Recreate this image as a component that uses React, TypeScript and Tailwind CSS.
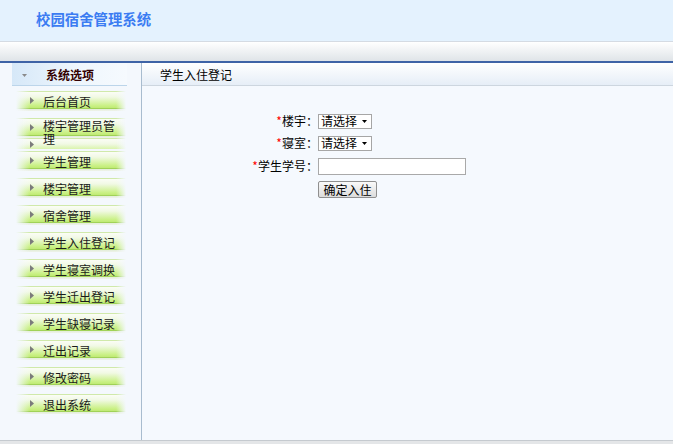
import React from "react";

const items: string[] = [
  "后台首页",
  "楼宇管理员管理",
  "学生管理",
  "楼宇管理",
  "宿舍管理",
  "学生入住登记",
  "学生寝室调换",
  "学生迁出登记",
  "学生缺寝记录",
  "迁出记录",
  "修改密码",
  "退出系统",
];

function Arrow() {
  return (
    <svg width="4" height="7" viewBox="0 0 4 7" className="block shrink-0">
      <path d="M0 0 L4 3.5 L0 7 Z" fill="#7b7b7b" />
    </svg>
  );
}

function MenuItem({ label, tall }: { label: string; tall?: boolean }) {
  return (
    <li
      className={
        "ml-[16px] w-[110px] flex pl-[14px] bg-repeat-y [background-size:100%_20px] [background-image:linear-gradient(to_right,#f4f8fd,#f4f8fd00_14px,#f4f8fd00_calc(100%_-_10px),#f4f8fd),linear-gradient(to_bottom,#d0e9aa_0px,#d0e9aa_1px,#fbfdf6_1px,#f1f9e4_6px,#c8f081_15px,#bfe975_17px,#a0d257_17px,#a0d257_18px,#e3edd8_18px,#eef3ea_20px)] " +
        (tall ? "h-[31px] mb-[2px]" : "h-[20px] mb-[7px]")
      }
    >
      <div className="w-[4px] flex flex-col pt-[6px] gap-[10px]">
        <Arrow />
        {tall && <Arrow />}
      </div>
      <span
        className={
          "ml-[9px] w-[80px] text-[12px] leading-[13px] text-[#1a1a1a] " +
          (tall ? "pt-[1px]" : "pt-[4px]")
        }
      >
        {label}
      </span>
    </li>
  );
}

function Select() {
  return (
    <div className="w-[54px] h-[15px] border border-[#a6a6a6] bg-white flex items-center pl-[2px] text-[12px] leading-none text-black">
      <span>请选择</span>
      <svg className="ml-auto mr-[4px] block" width="5" height="3" viewBox="0 0 5 3">
        <path d="M0 0 H5 L2.5 3 Z" fill="#000" />
      </svg>
    </div>
  );
}

function Label({ text }: { text: string }) {
  return (
    <div className="text-right text-[12px] leading-none text-black whitespace-nowrap">
      <span className="text-[#ff0000]">*</span>
      {text}：
    </div>
  );
}

export default function App() {
  return (
    <div className="w-[673px] h-[444px] flex flex-col bg-[#f5f9fe] overflow-hidden font-['Noto_Sans_CJK_SC','Liberation_Sans',sans-serif]">
      {/* header */}
      <header className="h-[41px] shrink-0 bg-[#e4f2fe] flex items-center pl-[36px] pb-[3px]">
        <h1 className="text-[14.4px] font-bold text-[#3b7cf2] leading-none">校园宿舍管理系统</h1>
      </header>
      {/* gray bar */}
      <div className="h-[22px] shrink-0 border-t border-[#d5dbe3] border-b-2 border-b-[#3e63a6] bg-[linear-gradient(to_bottom,#ffffff,#dfe4e8)]" />
      {/* main */}
      <div className="h-[377px] shrink-0 flex">
        <aside className="w-[142px] shrink-0 border-r border-[#a8bccf] bg-[#f4f8fd]">
          <div className="ml-[12px] w-[115px] h-[23px] border-b border-[#bcd5ea] bg-[linear-gradient(to_right,#d6e8f8,#eef6fd_55%,#f6fafe)] flex items-center pl-[10px] pt-[2px]">
            <svg width="5" height="3" viewBox="0 0 5 3" className="block shrink-0">
              <path d="M0 0 H5 L2.5 3 Z" fill="#8a8a8a" />
            </svg>
            <span className="ml-[19px] text-[12px] font-bold text-[#330000] leading-none">系统选项</span>
          </div>
          <ul className="mt-[5px]">
            {items.map((it, i) => (
              <MenuItem key={it} label={it} tall={i === 1} />
            ))}
          </ul>
        </aside>
        <main className="flex-1">
          <div className="h-[23px] border-b border-[#cdd6df] bg-[linear-gradient(to_bottom,#ffffff,#e6eef7)] flex items-center pl-[18px] pt-[2px]">
            <span className="text-[12px] leading-none text-black">学生入住登记</span>
          </div>
          <div className="mt-[24px] ml-[103px] grid grid-cols-[73px_auto] grid-rows-[22px_22px_24px_23px] items-center">
            <Label text="楼宇" />
            <Select />
            <Label text="寝室" />
            <Select />
            <Label text="学生学号" />
            <input
              type="text"
              className="w-[148px] h-[17px] border border-[#a9a9a9] bg-white outline-none"
            />
            <div />
            <div>
              <button className="w-[59px] h-[17px] border border-[#8f8f8f] rounded-[2px] bg-[linear-gradient(to_bottom,#fafafa,#dcdcdc)] text-[12px] font-normal leading-none text-black flex items-center justify-center">
                确定入住
              </button>
            </div>
          </div>
        </main>
      </div>
      {/* footer */}
      <div className="h-[4px] shrink-0 border-t border-[#c5cacf] bg-[#e4e6e8]" />
    </div>
  );
}
